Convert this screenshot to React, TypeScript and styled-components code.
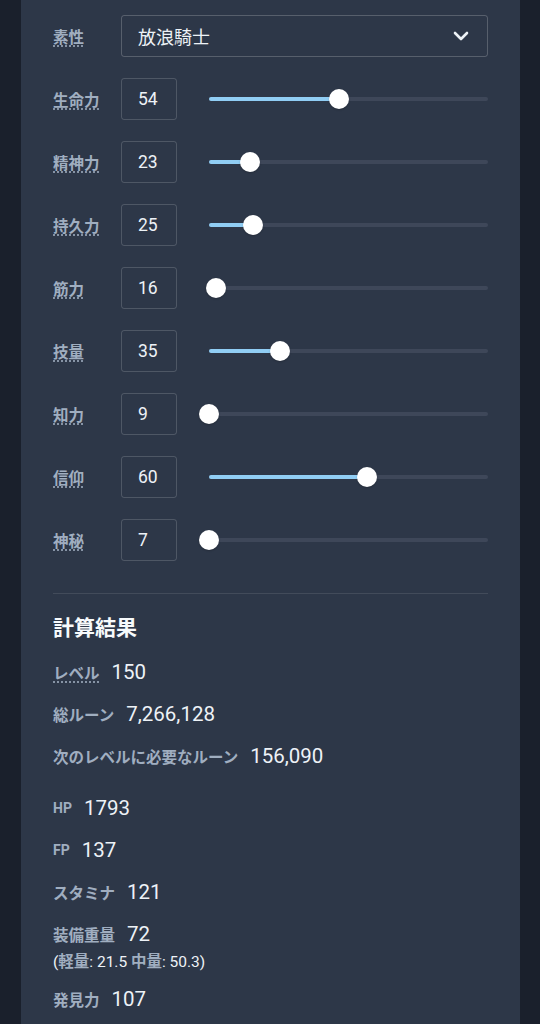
import styled, { createGlobalStyle } from "styled-components";

const GlobalStyle = createGlobalStyle`
  body {
    margin: 0;
    background: #1a202c;
    font-family: Roboto, "Noto Sans CJK JP", sans-serif;
    color: #edf2f7;
  }
`;

const Page = styled.div`
  padding: 0 20px 0 21px;
`;

const Card = styled.div`
  background: #2d3748;
  padding: 15px 32px 40px;
  min-height: 1024px;
  box-sizing: border-box;
`;

const StatRows = styled.div`
  display: flex;
  flex-direction: column;
  gap: 21px;
`;

const Row = styled.div`
  display: flex;
  align-items: center;
  height: 42px;
`;

const Label = styled.span<{ $dotted?: boolean }>`
  width: 68px;
  flex-shrink: 0;
  font-size: 15.5px;
  font-weight: 700;
  color: #a0aec0;
  text-decoration: ${({ $dotted }) => ($dotted ? "underline dotted" : "none")};
  text-underline-offset: 3px;
`;

const Select = styled.div`
  flex: 1;
  height: 42px;
  box-sizing: border-box;
  border: 1px solid rgba(255, 255, 255, 0.2);
  border-radius: 3px;
  display: flex;
  align-items: center;
  justify-content: space-between;
  padding: 0 18px 0 16px;
  font-size: 18px;
  color: #edf2f7;
`;

const NumberBox = styled.div`
  width: 56px;
  height: 42px;
  box-sizing: border-box;
  flex-shrink: 0;
  border: 1px solid rgba(255, 255, 255, 0.16);
  border-radius: 3px;
  display: flex;
  align-items: center;
  padding-left: 16px;
  font-size: 17.5px;
  color: #edf2f7;
`;

const SliderTrack = styled.div`
  position: relative;
  flex: 1;
  margin-left: 32px;
  height: 4px;
  border-radius: 2px;
  background: #3e4759;
`;

const SliderFill = styled.div`
  height: 100%;
  border-radius: 2px;
  background: #90cdf4;
`;

const Thumb = styled.div`
  position: absolute;
  top: 50%;
  width: 20px;
  height: 20px;
  border-radius: 50%;
  background: #fff;
  transform: translate(-50%, -50%);
  box-shadow: 0 1px 2px rgba(0, 0, 0, 0.2);
`;

const Divider = styled.hr`
  border: 0;
  border-top: 1px solid rgba(255, 255, 255, 0.1);
  margin: 32px 0 0;
`;

const Heading = styled.h2`
  margin: 22px 0 17px;
  font-size: 21px;
  line-height: 24px;
  font-weight: 700;
  color: #f7fafc;
`;

const ResultGroup = styled.div`
  display: flex;
  flex-direction: column;
  gap: 12px;
  & + & {
    margin-top: 22px;
  }
`;

const ResultRow = styled.div`
  display: flex;
  align-items: center;
  gap: 12px;
  height: 30px;
`;

const ResultLabel = styled.span<{ $dotted?: boolean; $small?: boolean }>`
  font-size: ${({ $small }) => ($small ? "14px" : "15.5px")};
  font-weight: 700;
  color: #a0aec0;
  text-decoration: ${({ $dotted }) => ($dotted ? "underline dotted" : "none")};
  text-underline-offset: 3px;
`;

const ResultValue = styled.span`
  font-size: 20.5px;
  color: #edf2f7;
`;

const SubLine = styled.div`
  margin-top: -9px;
  font-size: 15.5px;
  line-height: 20px;
  color: #edf2f7;

  b {
    color: #a0aec0;
  }
`;

const Chevron = () => (
  <svg width="16" height="10" viewBox="0 0 16 10">
    <polyline
      points="2,2 8,8 14,2"
      fill="none"
      stroke="#edf2f7"
      strokeWidth="2.6"
      strokeLinecap="round"
      strokeLinejoin="round"
    />
  </svg>
);

const stats = [
  { name: "生命力", value: 54, min: 15 },
  { name: "精神力", value: 23, min: 10 },
  { name: "持久力", value: 25, min: 11 },
  { name: "筋力", value: 16, min: 14 },
  { name: "技量", value: 35, min: 13 },
  { name: "知力", value: 9, min: 9 },
  { name: "信仰", value: 60, min: 9 },
  { name: "神秘", value: 7, min: 7 },
];

const App = () => {
  return (
    <Page>
      <GlobalStyle />
      <Card>
        <StatRows>
          <Row>
            <Label $dotted>素性</Label>
            <Select>
              放浪騎士
              <Chevron />
            </Select>
          </Row>
          {stats.map((s) => {
            const pct = ((s.value - s.min) / (99 - s.min)) * 100;
            return (
              <Row key={s.name}>
                <Label $dotted>{s.name}</Label>
                <NumberBox>{s.value}</NumberBox>
                <SliderTrack>
                  <SliderFill style={{ width: `${pct}%` }} />
                  <Thumb style={{ left: `${pct}%` }} />
                </SliderTrack>
              </Row>
            );
          })}
        </StatRows>

        <Divider />
        <Heading>計算結果</Heading>

        <ResultGroup>
          <ResultRow>
            <ResultLabel $dotted>レベル</ResultLabel>
            <ResultValue>150</ResultValue>
          </ResultRow>
          <ResultRow>
            <ResultLabel>総ルーン</ResultLabel>
            <ResultValue>7,266,128</ResultValue>
          </ResultRow>
          <ResultRow>
            <ResultLabel>次のレベルに必要なルーン</ResultLabel>
            <ResultValue>156,090</ResultValue>
          </ResultRow>
        </ResultGroup>

        <ResultGroup>
          <ResultRow>
            <ResultLabel $small>HP</ResultLabel>
            <ResultValue>1793</ResultValue>
          </ResultRow>
          <ResultRow>
            <ResultLabel $small>FP</ResultLabel>
            <ResultValue>137</ResultValue>
          </ResultRow>
          <ResultRow>
            <ResultLabel>スタミナ</ResultLabel>
            <ResultValue>121</ResultValue>
          </ResultRow>
          <ResultRow>
            <ResultLabel>装備重量</ResultLabel>
            <ResultValue>72</ResultValue>
          </ResultRow>
          <SubLine>
            (<b>軽量</b>: 21.5 <b>中量</b>: 50.3)
          </SubLine>
          <ResultRow>
            <ResultLabel>発見力</ResultLabel>
            <ResultValue>107</ResultValue>
          </ResultRow>
        </ResultGroup>
      </Card>
    </Page>
  );
};

export default App;
